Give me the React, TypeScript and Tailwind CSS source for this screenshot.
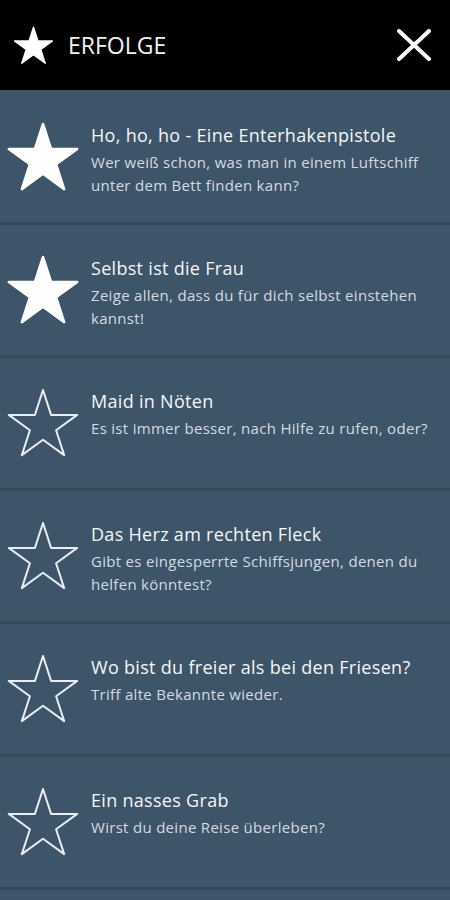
import * as React from "react";

interface Achievement {
  id: number;
  title: string;
  text: string;
  done: boolean;
}

const achievements: Achievement[] = [
  {
    id: 1,
    title: "Ho, ho, ho - Eine Enterhakenpistole",
    text: "Wer weiß schon, was man in einem Luftschiff unter dem Bett finden kann?",
    done: true,
  },
  {
    id: 2,
    title: "Selbst ist die Frau",
    text: "Zeige allen, dass du für dich selbst einstehen kannst!",
    done: true,
  },
  {
    id: 3,
    title: "Maid in Nöten",
    text: "Es ist immer besser, nach Hilfe zu rufen, oder?",
    done: false,
  },
  {
    id: 4,
    title: "Das Herz am rechten Fleck",
    text: "Gibt es eingesperrte Schiffsjungen, denen du helfen könntest?",
    done: false,
  },
  {
    id: 5,
    title: "Wo bist du freier als bei den Friesen?",
    text: "Triff alte Bekannte wieder.",
    done: false,
  },
  {
    id: 6,
    title: "Ein nasses Grab",
    text: "Wirst du deine Reise überleben?",
    done: false,
  },
];

const STAR_POINTS =
  "37,2 45.08,26.88 71.24,26.88 50.08,42.25 58.16,67.12 37,51.75 15.84,67.12 23.92,42.25 2.76,26.88 28.92,26.88";

const Star = ({ filled, className }: { filled: boolean; className?: string }) => (
  <svg viewBox="0 0 74 70" className={className}>
    <polygon
      points={STAR_POINTS}
      fill={filled ? "#ffffff" : "none"}
      stroke={filled ? "#ffffff" : "#e8eef3"}
      strokeWidth={filled ? 2.5 : 2}
      strokeLinejoin="round"
    />
  </svg>
);

export default function App() {
  return (
    <div
      className="w-[450px] h-[900px] overflow-hidden bg-[#3e5468]"
      style={{ fontFamily: '"Open Sans", "Noto Sans", sans-serif' }}
    >
      {/* Header */}
      <header className="flex items-center h-[90px] bg-black pl-[13px] pr-[12px]">
        <Star filled className="w-[41px] h-[39px]" />
        <span className="ml-[14px] text-[23px] text-[#f2f2f2]">ERFOLGE</span>
        <button className="ml-auto mr-[6px] w-[36px] h-[36px] flex items-center justify-center">
          <svg viewBox="0 0 34 32" className="w-[34px] h-[32px]">
            <path
              d="M2 2 L32 30 M32 2 L2 30"
              stroke="#ffffff"
              strokeWidth={4}
              strokeLinecap="round"
            />
          </svg>
        </button>
      </header>

      {/* Achievement list */}
      <ul className="pt-[2px]">
        {achievements.map((item) => (
          <li
            key={item.id}
            className="flex h-[133px] border-b-[3px] border-[#36495b]"
          >
            <div className="w-[91px] shrink-0 flex items-center pl-[6px]">
              <Star filled={item.done} className="w-[74px] h-[70px]" />
            </div>
            <div className="flex-1 pt-[31px] pr-[14px]">
              <div className="text-[18px] leading-[24px] tracking-[0.3px] text-[#f4f6f8]">
                {item.title}
              </div>
              <p className="mt-[4px] text-[15px] leading-[23px] tracking-[0.3px] text-[#d3dbe2]">
                {item.text}
              </p>
            </div>
          </li>
        ))}
        <li className="h-[133px]" />
      </ul>
    </div>
  );
}
